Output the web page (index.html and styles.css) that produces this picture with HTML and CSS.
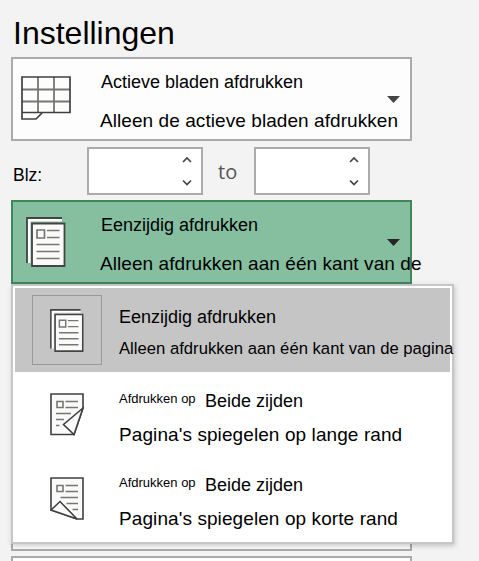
FILE: index.html
```html
<!DOCTYPE html>
<html lang="nl">
<head>
<meta charset="utf-8">
<title>Instellingen</title>
<link rel="stylesheet" href="styles.css">
</head>
<body>
<svg class="defs" width="0" height="0">
  <symbol id="pages" viewBox="0 0 40 50">
    <path d="M3 46V3H36" fill="none" stroke="#fff" stroke-width="3"/>
    <path d="M1 46V1H36" fill="none" stroke="#444" stroke-width="1.800"/>
    <path d="M6 6.500H38.500V49H6z" fill="#fafafa" stroke="#444" stroke-width="1.800"/>
    <path d="M11 13h7.500v8h-7.500z" fill="none" stroke="#777772" stroke-width="1.700"/>
    <path d="M21 13.500H33.500M21 20.500H33.500M10.500 27.500H33.500M10.500 34.500H33.500M10.500 41.500H33.500" fill="none" stroke="#777772" stroke-width="1.700"/>
  </symbol>
</svg>
<main class="panel">
  <h1 class="title">Instellingen</h1>
  <section class="select">
    <svg class="sheet-icon" width="50" height="45" viewBox="0 0 50 45">
      <path d="M17 1V36M33 1V36M1 13.500H49M1 25.500H49" fill="none" stroke="#777772" stroke-width="1.800"/>
      <path d="M1 1H49V36.500H1zM1 36V43H15L21 37" fill="none" stroke="#404040" stroke-width="1.700"/>
    </svg>
    <div class="copy"><div class="label">Actieve bladen afdrukken</div><div class="detail">Alleen de actieve bladen afdrukken</div></div>
    <svg class="arrow" width="13" height="7" viewBox="0 0 13 7"><path d="M0 0H13L6.500 7z" fill="#444"/></svg>
  </section>
  <section class="range">
    <span class="range-label">Blz:</span>
    <div class="spinner"><svg width="10" height="30" viewBox="0 0 10 30"><path d="M1 6 5 2 9 6M1 24.500 5 28.500 9 24.500" fill="none" stroke="#444" stroke-width="1.700"/></svg></div>
    <span class="to">to</span>
    <div class="spinner"><svg width="10" height="30" viewBox="0 0 10 30"><path d="M1 6 5 2 9 6M1 24.500 5 28.500 9 24.500" fill="none" stroke="#444" stroke-width="1.700"/></svg></div>
  </section>
  <section class="select active">
    <svg class="pages-icon" width="40" height="50"><use href="#pages"/></svg>
    <div class="copy"><div class="label">Eenzijdig afdrukken</div><div class="detail">Alleen afdrukken aan één kant van de</div></div>
    <svg class="arrow" width="13" height="7" viewBox="0 0 13 7"><path d="M0 0H13L6.500 7z" fill="#262626"/></svg>
  </section>
  <section class="select behind"></section>
  <section class="select next"></section>
  <div class="menu">
    <div class="option selected">
      <div class="frame"><svg width="34" height="43" viewBox="0 0 40 50" preserveAspectRatio="none"><use href="#pages" width="40" height="50"/></svg></div>
      <div class="copy"><div class="label">Eenzijdig afdrukken</div><div class="small-detail">Alleen afdrukken aan één kant van de pagina</div></div>
    </div>
    <div class="option">
      <div class="frame"><svg width="34" height="43" viewBox="0 0 34 43">
        <path d="M1 1H33V15L24 41.500H1z" fill="#fafafa" stroke="#404040" stroke-width="1.600"/>
        <path d="M7 8.500h6v6h-6zM15.500 8.500H28M15.500 14.500H28M6 20.500H21M6 26.500H14M6 32.500H9.500" fill="none" stroke="#777772" stroke-width="1.600"/>
        <path d="M33 15 13.500 31.500 24 41.500z" fill="#fafafa" stroke="#404040" stroke-width="1.600"/>
      </svg></div>
      <div class="copy"><div class="both"><span class="prefix">Afdrukken op</span><span class="label">Beide zijden</span></div><div class="detail">Pagina's spiegelen op lange rand</div></div>
    </div>
    <div class="option">
      <div class="frame"><svg width="34" height="43" viewBox="0 0 34 43">
        <path d="M1 1H33V42H27L1 33z" fill="#fafafa" stroke="#404040" stroke-width="1.600"/>
        <path d="M7 8.500h6v6h-6zM15.500 8.500H28M15.500 14.500H28M10.500 20.500H28M16.500 26.500H28M22.500 32.500H28" fill="none" stroke="#777772" stroke-width="1.600"/>
        <path d="M1 33 10 24.500 27 42z" fill="#fafafa" stroke="#404040" stroke-width="1.600"/>
      </svg></div>
      <div class="copy"><div class="both"><span class="prefix">Afdrukken op</span><span class="label">Beide zijden</span></div><div class="detail">Pagina's spiegelen op korte rand</div></div>
    </div>
  </div>
</main>
</body>
</html>
```
FILE: styles.css
```css
* { box-sizing: border-box; }
body { margin: 0; height: 561px; overflow: hidden; background: #f3f3f3; color: #000; font-family: "Liberation Sans", Arial, sans-serif; white-space: nowrap; }
svg { display: block; flex: none; }
.defs { position: absolute; }
.panel { position: relative; width: 479px; height: 561px; padding: 15px 0 0 11px; overflow: hidden; }
.title { height: 42px; margin: 0 0 0 2px; font-size: 32px; line-height: 36px; font-weight: 400; }
.select { display: flex; width: 401px; height: 84px; border: 2px solid #ababab; background: #fdfdfd; }
.sheet-icon { margin: 17px 0 0 8px; }
.select .copy { flex: none; width: 286px; margin: 13px 0 0 30px; }
.label { font-size: 18px; line-height: 20px; }
.detail { margin: 18px 0 0 -1px; font-size: 19px; line-height: 22px; letter-spacing: .07px; }
.arrow { margin: 37px 0 0; }
.range { display: flex; height: 59px; padding-top: 6px; }
.range-label { width: 76px; padding: 18px 0 0 2px; font-size: 17.500px; line-height: 20px; }
.spinner { display: flex; justify-content: flex-end; width: 116px; height: 48px; padding: 7px 9px 0 0; border: 2px solid #ababab; background: #fff; }
.to { width: 51px; padding: 12px 0 0 15px; color: #555; font: 20px/26px "Open Sans", sans-serif; }
.active { border-color: #3f865b; background: #86bfa0; }
.pages-icon { margin: 15px 0 0 13px; }
.active .copy { margin-left: 35px; }
.behind { height: 267px; }
.next { margin-top: 5px; }
.menu { position: absolute; left: 11px; top: 284px; width: 443px; height: 260px; padding: 2px; border: 2px solid #c6c6c6; background: #fff; box-shadow: 1px 2px 5px rgba(0,0,0,.2); }
.option { display: flex; height: 84px; padding: 7px 0 0 17px; }
.option.selected { background: #c5c5c5; }
.frame { flex: none; width: 70px; height: 70px; padding: 13px 0 0 17px; border: 1px solid transparent; }
.selected .frame { border-color: #999; }
.option .copy { flex: none; margin: 12px 0 0 17px; }
.small-detail { margin-top: 13px; font-size: 16.670px; line-height: 18px; }
.both { display: flex; }
.prefix { width: 86px; font-size: 13px; line-height: 15px; }
.option .detail { margin: 13px 0 0; letter-spacing: .09px; }
.active .arrow { margin-left: 0; }
```
